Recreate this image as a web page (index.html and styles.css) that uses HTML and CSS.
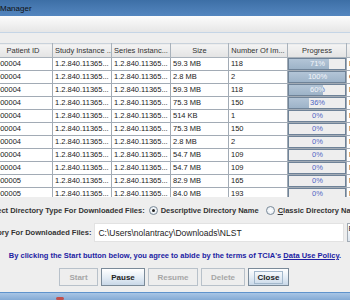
FILE: index.html
```html
<!DOCTYPE html>
<html lang="en">
<head>
  <meta charset="UTF-8" />
  <title>Download Manager</title>
  <link rel="stylesheet" href="styles.css">
</head>
<body>
  <div class="window">
    <div class="titlebar">Manager</div>
    <div class="toolbar"></div>

    <div class="table-wrap">
      <table class="downloads">
        <thead>
          <tr>
            <th>Patient ID</th>
            <th>Study Instance ...</th>
            <th>Series Instanc...</th>
            <th class="size">Size</th>
            <th>Number Of Im...</th>
            <th>Progress</th>
            <th>Status</th>
          </tr>
        </thead>
        <tbody id="rows"></tbody>
      </table>
    </div>

    <div class="options">
      <div class="radio-row">
        <span class="label clip-sel">Select Directory Type For Downloaded Files:</span>
        <span class="radio checked"></span>
        <span class="radio-text">Descriptive Directory Name</span>
        <span class="radio"></span>
        <span class="radio-text"><u>C</u>lassic Directory Name</span>
      </div>

      <div class="dir-row">
        <span class="label clip-dir">Directory For Downloaded Files:</span>
        <div class="field">C:\Users\nolantracy\Downloads\NLST</div>
        <div class="browse">Browse</div>
      </div>

      <p class="notice">By clicking the Start button below, you agree to abide by the terms of TCIA's <u>Data Use Policy</u>.</p>

      <div class="buttons">
        <button class="btn start" disabled>Start</button>
        <button class="btn pause">Pause</button>
        <button class="btn resume" disabled>Resume</button>
        <button class="btn delete" disabled>Delete</button>
        <button class="btn close"><span class="focus">Close</span></button>
      </div>
    </div>

    <div class="taskbar"><span class="mark"></span></div>
  </div>

  <script>
    const data = [
      ['000004', '59.3 MB', '118', 71, 'Downloading'],
      ['000004', '2.8 MB', '2', 100, 'Completed'],
      ['000004', '59.3 MB', '118', 60, 'Downloading'],
      ['000004', '75.3 MB', '150', 36, 'Downloading'],
      ['000004', '514 KB', '1', 0, 'Not Started'],
      ['000004', '75.3 MB', '150', 0, 'Not Started'],
      ['000004', '2.8 MB', '2', 0, 'Not Started'],
      ['000004', '54.7 MB', '109', 0, 'Not Started'],
      ['000004', '54.7 MB', '109', 0, 'Not Started'],
      ['000005', '82.9 MB', '165', 0, 'Not Started'],
      ['000005', '84.0 MB', '193', 0, 'Not Started']
    ];

    const rows = document.getElementById('rows');
    data.forEach(d => {
      const tr = document.createElement('tr');
      tr.innerHTML =
        `<td>${d[0]}</td>` +
        `<td>1.2.840.11365...</td>` +
        `<td>1.2.840.11365...</td>` +
        `<td>${d[1]}</td>` +
        `<td>${d[2]}</td>` +
        `<td class="prog"><div class="bar"><span class="txt">${d[3]}%</span>` +
        `<div class="fill" style="width:${d[3]}%"><span class="txt">${d[3]}%</span></div></div></td>` +
        `<td>${d[4]}</td>`;
      rows.appendChild(tr);
    });
  </script>
</body>
</html>
```

FILE: styles.css
```css
* {
  box-sizing: border-box;
}

body {
  margin: 0;
  font-family: 'Liberation Sans', Arial, sans-serif;
  font-size: 7.5px;
  color: #222;
  background: #eeeeee;
}

.window {
  width: 350px;
  height: 300px;
  overflow: hidden;
  background: #eeeeee;
}

.titlebar {
  height: 16px;
  line-height: 17px;
  font-size: 8px;
  background: linear-gradient(#3d6fa6, #5486bf);
  color: #111;
  padding-left: 0;
}

.toolbar {
  height: 17px;
  background: linear-gradient(#fcfcfc, #e6e6e6);
  border-bottom: 1px solid #c5d5e6;
}

.table-wrap {
  margin-top: 10px;
  height: 154px;
  overflow: hidden;
}

.downloads {
  margin-left: -7px;
  border-collapse: collapse;
  table-layout: fixed;
  width: 413px;
}

.downloads th,
.downloads td {
  width: 59px;
  padding: 0 2px;
  white-space: nowrap;
  overflow: hidden;
  font-weight: normal;
}

.downloads th.size {
  width: 58px;
}

.downloads th {
  height: 14px;
  text-align: center;
  color: #333;
  background: linear-gradient(#f4f4f4, #e3e3e3);
  border: 1px solid #a9b2bb;
  border-top-color: #c9d2db;
}

.downloads td {
  height: 13px;
  line-height: 12px;
  color: #1a1a1a;
  background: #fff;
  border: 1px solid #a2abb5;
}

.downloads td.prog {
  padding: 0;
  background: #eeeeee;
}

.bar {
  position: relative;
  height: 12px;
  border: 1px solid #6f8398;
  background: #eeeeee;
}

.bar .txt {
  display: block;
  width: 57px;
  text-align: center;
  line-height: 10px;
  color: #4f67c4;
}

.fill {
  position: absolute;
  left: 0;
  top: 0;
  bottom: 0;
  overflow: hidden;
  background: linear-gradient(#b3c5d7, #9db3c8);
}

.fill .txt {
  color: #f4f6fa;
}

.options {
  padding-top: 5px;
}

.label {
  font-weight: bold;
  color: #333;
  white-space: nowrap;
}

.radio-row {
  display: flex;
  align-items: center;
  height: 16px;
  white-space: nowrap;
}

.clip-sel {
  margin-left: -14px;
  margin-right: 4px;
}

.radio {
  width: 9px;
  height: 9px;
  border-radius: 50%;
  border: 1px solid #7a8a99;
  background: radial-gradient(#ffffff, #dfe7ef);
  flex-shrink: 0;
  position: relative;
}

.radio.checked::after {
  content: "";
  position: absolute;
  left: 2px;
  top: 2px;
  width: 3px;
  height: 3px;
  border-radius: 50%;
  background: #222;
}

.radio-text {
  font-weight: bold;
  color: #333;
  margin-left: 3px;
  margin-right: 7px;
}

.dir-row {
  display: flex;
  align-items: center;
  margin-top: 5px;
  height: 19px;
  white-space: nowrap;
}

.clip-dir {
  margin-left: -24px;
  margin-right: 3px;
}

.field {
  width: 250px;
  height: 19px;
  line-height: 18px;
  padding-left: 3px;
  font-size: 8.5px;
  background: #fff;
  border: 1px solid #e2e2e2;
  flex-shrink: 0;
}

.browse {
  margin-left: 3px;
  height: 19px;
  width: 60px;
  flex-shrink: 0;
  border: 1px solid #a3acb5;
  background: linear-gradient(#ffffff, #dde6ef);
}

.notice {
  margin: 7px 0 0;
  height: 14px;
  line-height: 14px;
  text-align: center;
  font-weight: bold;
  color: #2121a3;
  white-space: nowrap;
}

.buttons {
  display: flex;
  gap: 3px;
  margin-top: 5px;
  padding-left: 59px;
}

.btn {
  height: 18px;
  padding: 0;
  font-family: inherit;
  font-size: 8px;
  font-weight: bold;
  color: #222;
  border: 1px solid #7a8a99;
  background: linear-gradient(#ffffff, #e3ecf5 55%, #c9d8e8);
}

.btn:disabled {
  color: #a6a6a6;
  border-color: #b8c1ca;
  background: #eeeeee;
}

.start { width: 39px; }
.pause { width: 44px; }
.resume { width: 50px; }
.delete { width: 44px; }
.close { width: 41px; }

.focus {
  border: 1px solid #a3b8cc;
  padding: 1px 3px;
}

.taskbar {
  margin-top: 6px;
  height: 10px;
  border-top: 1px solid #5f93cc;
  background: linear-gradient(#a8c5e5, #7aa3d1);
  padding-left: 56px;
}

.mark {
  display: inline-block;
  width: 8px;
  height: 3px;
  margin-top: 2px;
  background: #c0504d;
  border-radius: 2px;
}
```
